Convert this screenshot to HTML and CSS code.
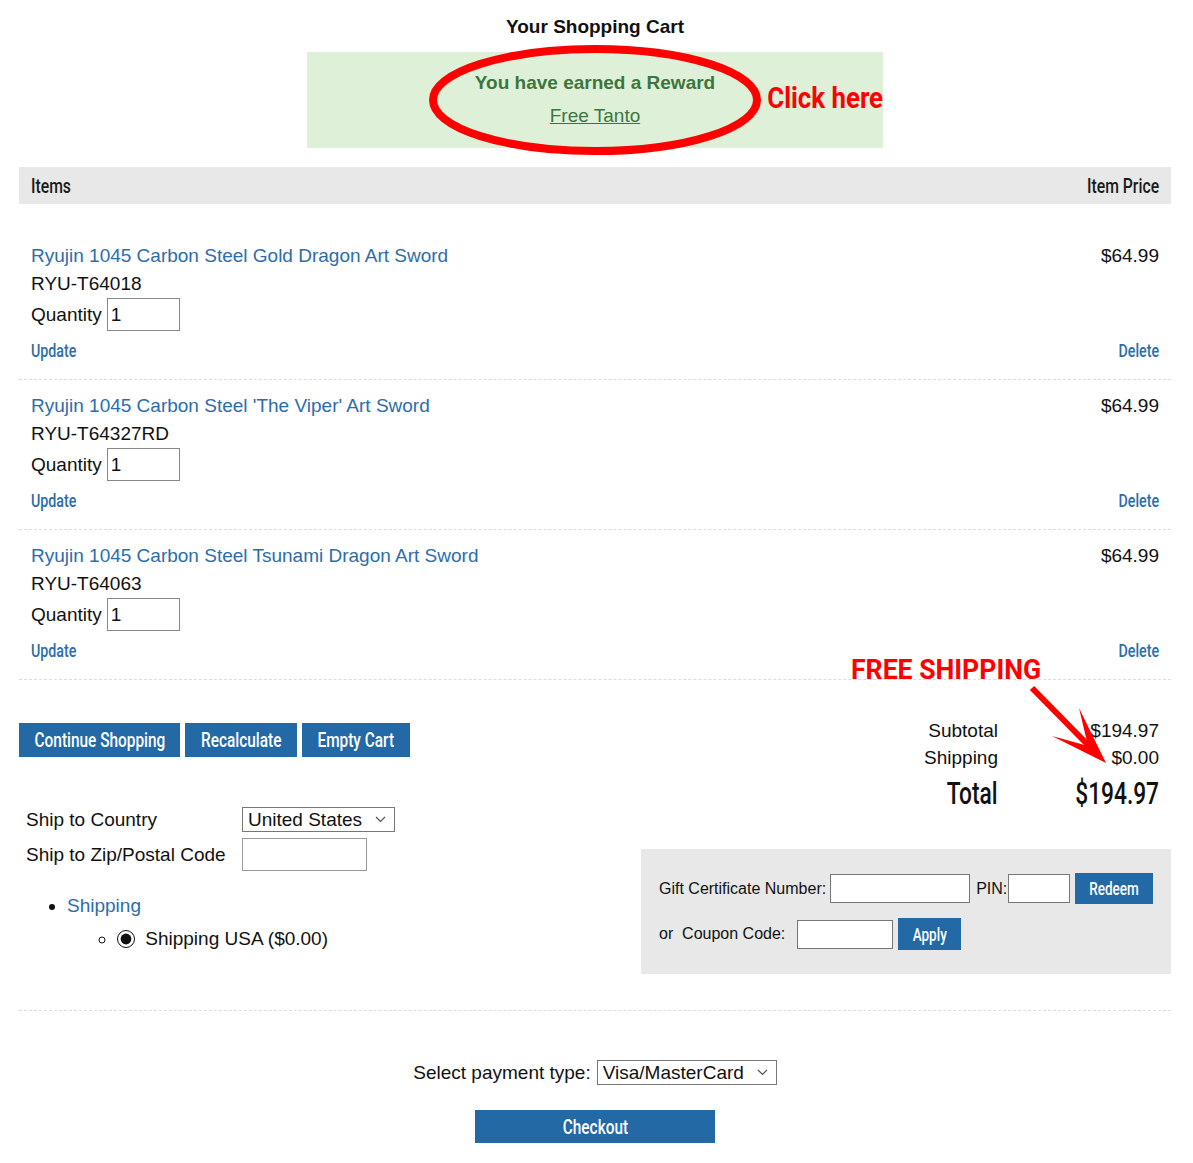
FILE: index.html
```html
<!DOCTYPE html>
<html lang="en">
<head>
  <meta charset="UTF-8">
  <meta name="viewport" content="width=device-width, initial-scale=1.0">
  <title>Your Shopping Cart</title>
  <link rel="stylesheet" href="styles.css">
</head>
<body>
  <div class="page">
    <h1 class="cart-title">Your Shopping Cart</h1>

    <div class="reward">
      <p class="reward-text">You have earned a Reward</p>
      <a href="#" class="reward-link">Free Tanto</a>
      <span class="click-here">Click here</span>
      <svg class="reward-ring" width="340" height="116" viewBox="0 0 340 116">
        <ellipse cx="170" cy="58" rx="162" ry="51" fill="none" stroke="#ff0000" stroke-width="8"/>
      </svg>
    </div>

    <div class="cart-head">
      <span class="head-left">Items</span>
      <span class="head-right">Item Price</span>
    </div>

    <div class="cart-items">
      <div class="item">
        <div class="item-info">
          <a href="#" class="item-name">Ryujin 1045 Carbon Steel Gold Dragon Art Sword</a>
          <div class="item-sku">RYU-T64018</div>
          <label class="item-qty">Quantity <input type="text" value="1"></label>
          <a href="#" class="item-action">Update</a>
        </div>
        <div class="item-side">
          <div class="item-price">$64.99</div>
          <a href="#" class="item-action action-right">Delete</a>
        </div>
      </div>

      <div class="item">
        <div class="item-info">
          <a href="#" class="item-name">Ryujin 1045 Carbon Steel 'The Viper' Art Sword</a>
          <div class="item-sku">RYU-T64327RD</div>
          <label class="item-qty">Quantity <input type="text" value="1"></label>
          <a href="#" class="item-action">Update</a>
        </div>
        <div class="item-side">
          <div class="item-price">$64.99</div>
          <a href="#" class="item-action action-right">Delete</a>
        </div>
      </div>

      <div class="item">
        <div class="item-info">
          <a href="#" class="item-name">Ryujin 1045 Carbon Steel Tsunami Dragon Art Sword</a>
          <div class="item-sku">RYU-T64063</div>
          <label class="item-qty">Quantity <input type="text" value="1"></label>
          <a href="#" class="item-action">Update</a>
        </div>
        <div class="item-side">
          <div class="item-price">$64.99</div>
          <a href="#" class="item-action action-right">Delete</a>
        </div>
      </div>
    </div>

    <div class="cart-bottom">
      <div class="cart-left">
        <div class="cart-buttons">
          <button class="btn btn-continue"><span>Continue Shopping</span></button>
          <button class="btn btn-recalc"><span>Recalculate</span></button>
          <button class="btn btn-empty"><span>Empty Cart</span></button>
        </div>

        <div class="ship-form">
          <div class="ship-row">
            <label>Ship to Country</label>
            <span class="select-wrap">
              <select class="select ship-country">
                <option>United States</option>
              </select>
              <svg class="chevron" width="11" height="7" viewBox="0 0 11 7"><path d="M1 1l4.5 4.5L10 1" fill="none" stroke="#555" stroke-width="1.2"/></svg>
            </span>
          </div>
          <div class="ship-row">
            <label>Ship to Zip/Postal Code</label>
            <input type="text" class="zip-input">
          </div>

          <ul class="ship-methods">
            <li>
              <a href="#">Shipping</a>
              <ul>
                <li><label class="ship-option"><input type="radio" name="ship" checked> Shipping USA ($0.00)</label></li>
              </ul>
            </li>
          </ul>
        </div>
      </div>

      <div class="cart-right">
        <span class="free-shipping">FREE SHIPPING</span>
        <svg class="free-arrow" width="90" height="85" viewBox="0 0 90 85">
          <line x1="7" y1="5" x2="66" y2="65" stroke="#ff0000" stroke-width="6"/>
          <polygon points="81,80 27,53 63,63 54,25" fill="#ff0000"/>
        </svg>

        <div class="totals">
          <span class="total-label">Subtotal</span>
          <span class="total-value">$194.97</span>
          <span class="total-label">Shipping</span>
          <span class="total-value">$0.00</span>
          <span class="grand"><span>Total</span></span>
          <span class="grand"><span>$194.97</span></span>
        </div>

        <div class="gift-box">
          <div class="gift-row">
            <label>Gift Certificate Number:</label><input type="text" class="gift-number">
            <label class="pin-label">PIN:</label><input type="text" class="gift-pin">
            <button class="btn btn-small btn-redeem"><span>Redeem</span></button>
          </div>
          <div class="gift-row">
            <label>or&nbsp; Coupon Code:</label>
            <input type="text" class="coupon-code">
            <button class="btn btn-small btn-apply"><span>Apply</span></button>
          </div>
        </div>
      </div>
    </div>

    <div class="payment">
      <div class="payment-row">
        <label>Select payment type:</label>
        <span class="select-wrap">
          <select class="select pay-type">
            <option>Visa/MasterCard</option>
          </select>
          <svg class="chevron" width="11" height="7" viewBox="0 0 11 7"><path d="M1 1l4.5 4.5L10 1" fill="none" stroke="#555" stroke-width="1.2"/></svg>
        </span>
      </div>
      <button class="btn btn-checkout"><span>Checkout</span></button>
    </div>
  </div>
</body>
</html>
```

FILE: styles.css
```css
body {
  margin: 0;
  background-color: #fff;
  color: #111;
  font-family: "Liberation Sans", Arial, sans-serif;
  font-size: 19px;
}

a {
  color: #2c6dac;
  text-decoration: none;
}

.page {
  width: 1152px;
  margin-left: 19px;
  padding-top: 13px;
  padding-bottom: 20px;
}

.cart-title {
  margin: 0;
  font-size: 19px;
  line-height: 28px;
  text-align: center;
}

/* reward banner */
.reward {
  position: relative;
  width: 576px;
  height: 96px;
  margin: 11px auto 0;
  background-color: #dff0d8;
  text-align: center;
}

.reward-text {
  margin: 0;
  padding-top: 17px;
  line-height: 28px;
  font-weight: bold;
  color: #3c763d;
}

.reward-link {
  display: inline-block;
  margin-top: 5px;
  line-height: 28px;
  color: #3c763d;
  text-decoration: underline;
}

.click-here {
  position: absolute;
  right: 0;
  top: 29px;
  line-height: 34px;
  font-family: Roboto, sans-serif;
  font-weight: bold;
  font-size: 29px;
  color: #ff0000;
  transform: scaleX(0.89);
  transform-origin: right center;
}

.reward-ring {
  position: absolute;
  left: 118px;
  top: -10px;
}

/* header + items */
.cart-head {
  display: flex;
  justify-content: space-between;
  align-items: center;
  height: 37px;
  margin-top: 19px;
  padding: 0 12px;
  background-color: #e8e8e8;
  font-family: Roboto, sans-serif;
  font-weight: 500;
  font-size: 21px;
  color: #1a1a1a;
}

.head-left,
.head-right {
  display: inline-block;
  transform: scaleX(0.75);
  transform-origin: left center;
}

.head-right {
  transform-origin: right center;
}

.cart-items {
  padding-top: 26px;
}

.item {
  display: flex;
  justify-content: space-between;
  padding: 12px 12px 14px;
  border-bottom: 1px dashed #dcdcdc;
}

.item-info,
.item-side {
  display: flex;
  flex-direction: column;
  align-items: flex-start;
  line-height: 28px;
}

.item-side {
  align-items: flex-end;
  justify-content: space-between;
}

.item-qty {
  display: flex;
  align-items: center;
  gap: 5px;
}

.item-qty input {
  width: 73px;
  height: 33px;
  box-sizing: border-box;
  padding: 0 3px;
  border: 1px solid #888;
  font-family: inherit;
  font-size: 19px;
  color: #111;
}

.item-action {
  display: inline-block;
  margin-top: 6px;
  font-family: Roboto, sans-serif;
  font-weight: 500;
  font-size: 19px;
  transform: scaleX(0.75);
  transform-origin: left center;
}

.item-action.action-right {
  transform-origin: right center;
}

/* bottom area */
.cart-bottom {
  display: flex;
  justify-content: space-between;
  padding-bottom: 36px;
  border-bottom: 1px dashed #dcdcdc;
}

.cart-left {
  padding-top: 43px;
}

.cart-buttons {
  display: flex;
  gap: 5px;
}

.btn {
  display: flex;
  align-items: center;
  justify-content: center;
  height: 34px;
  padding: 0;
  border: none;
  background-color: #2369a5;
  color: #fff;
  font-family: Roboto, sans-serif;
  font-weight: 500;
  font-size: 20px;
  white-space: nowrap;
  cursor: pointer;
}

.btn span {
  display: inline-block;
  transform: scaleX(0.77);
}

.btn-continue {
  width: 161px;
}

.btn-recalc {
  width: 112px;
}

.btn-empty {
  width: 108px;
}

.ship-form {
  margin-top: 50px;
  padding-left: 7px;
}

.ship-row {
  display: flex;
  align-items: center;
  margin-bottom: 6px;
}

.ship-row label {
  width: 216px;
}

.select-wrap {
  position: relative;
  display: inline-block;
}

.select {
  appearance: none;
  height: 25px;
  padding: 0 28px 0 5px;
  border: 1px solid #777;
  border-radius: 0;
  background-color: #fff;
  color: #111;
  font-family: inherit;
  font-size: 19px;
}

.chevron {
  position: absolute;
  right: 9px;
  top: 9px;
  pointer-events: none;
}

.ship-country {
  width: 153px;
}

.zip-input {
  width: 125px;
  height: 33px;
  box-sizing: border-box;
  border: 1px solid #999;
}

.ship-methods {
  margin: 21px 0 0;
  padding-left: 41px;
  line-height: 28px;
}

.ship-methods ul {
  margin: 5px 0 0;
  padding-left: 50px;
  list-style: circle;
}

.ship-option input {
  width: 18px;
  height: 18px;
  margin: 0 5px 0 0;
  vertical-align: -3px;
  accent-color: #111;
}

/* totals */
.cart-right {
  position: relative;
  width: 530px;
}

.free-shipping {
  position: absolute;
  left: 210px;
  top: -27px;
  line-height: 34px;
  font-family: Roboto, sans-serif;
  font-weight: bold;
  font-size: 28px;
  color: #ff0000;
  white-space: nowrap;
  transform: scaleX(0.95);
  transform-origin: left center;
}

.free-arrow {
  position: absolute;
  left: 384px;
  top: 3px;
}

.totals {
  display: grid;
  grid-template-columns: 357px 1fr;
  margin-top: 37px;
  padding-right: 12px;
  text-align: right;
  line-height: 27px;
}

.totals .grand {
  margin-top: 5px;
  line-height: 34px;
  font-family: Roboto, sans-serif;
  font-weight: 500;
  font-size: 32px;
}

.totals .grand span {
  display: inline-block;
  transform: scaleX(0.71);
  transform-origin: right center;
}

.gift-box {
  margin-top: 39px;
  padding: 24px 18px;
  background-color: #e8e8e8;
  font-size: 16px;
}

.gift-row {
  display: flex;
  align-items: center;
  white-space: nowrap;
}

.gift-row + .gift-row {
  margin-top: 14px;
}

.gift-row input {
  flex-shrink: 0;
  height: 29px;
  box-sizing: border-box;
  border: 1px solid #777;
  background-color: #fff;
}

.gift-number {
  width: 140px;
  margin-left: 4px;
}

.pin-label {
  margin-left: 6px;
}

.gift-pin {
  width: 62px;
  margin-left: 1px;
}

.coupon-code {
  width: 96px;
  margin-left: 12px;
}

.btn-small {
  height: 31px;
  margin-left: 5px;
  font-size: 18px;
}

.btn-small span {
  transform: scaleX(0.75);
}

.btn-redeem {
  width: 78px;
}

.btn-apply {
  width: 63px;
  height: 32px;
}

/* payment */
.payment {
  display: flex;
  flex-direction: column;
  align-items: center;
  padding-top: 49px;
}

.payment-row {
  display: flex;
  align-items: center;
  gap: 6px;
}

.pay-type {
  width: 180px;
}

.btn-checkout {
  width: 240px;
  height: 33px;
  margin-top: 25px;
}
```
